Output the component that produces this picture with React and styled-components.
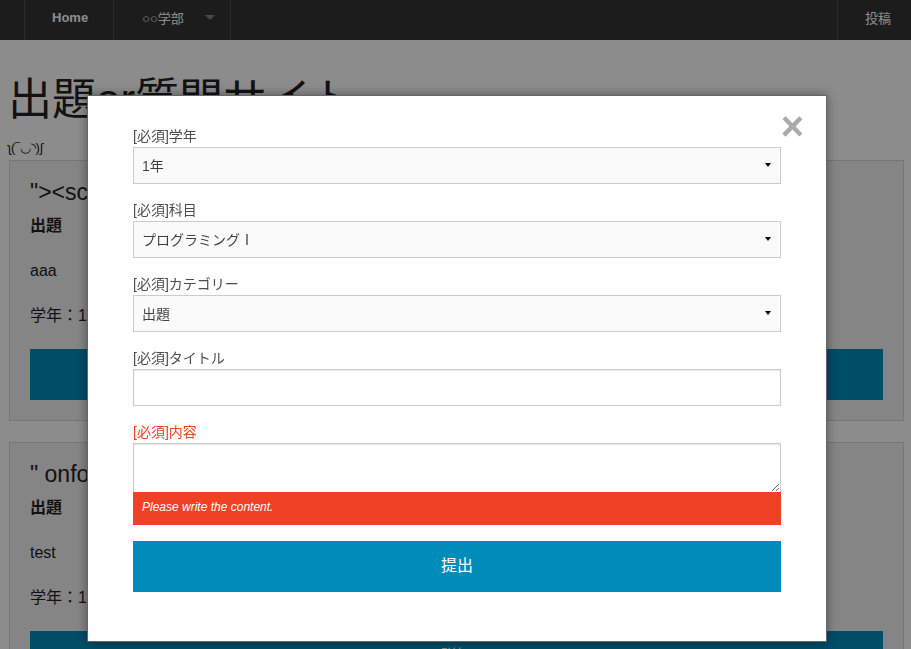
import React from "react";
import styled, { createGlobalStyle } from "styled-components";

const GlobalStyle = createGlobalStyle`
  html, body { margin: 0; padding: 0; background: #fff; }
  body {
    font-family: "Liberation Sans", "Noto Sans CJK JP", sans-serif;
    color: #222;
    overflow: hidden;
  }
  *, *::before, *::after { box-sizing: border-box; }
`;

const TopBar = styled.nav`
  display: flex;
  height: 40px;
  background: #333;
`;

const TitleArea = styled.div`
  width: 25px;
  border-right: 1px solid #4e4e4e;
`;

const NavItem = styled.a`
  display: flex;
  align-items: center;
  height: 40px;
  padding: ${(p) => p.$pad};
  padding-bottom: 5px;
  color: #fff;
  font-size: 13px;
  font-weight: ${(p) => (p.$bold ? "bold" : "normal")};
  text-decoration: none;
  border-right: ${(p) => (p.$edge === "right" ? "1px solid #4e4e4e" : "none")};
  border-left: ${(p) => (p.$edge === "left" ? "1px solid #4e4e4e" : "none")};
`;

const Caret = styled.span`
  margin-left: 21px;
  width: 0;
  height: 0;
  border-left: 5px solid transparent;
  border-right: 5px solid transparent;
  border-top: 5px solid rgba(255, 255, 255, 0.4);
`;

const Spacer = styled.div`
  flex: 1;
`;

const Main = styled.main`
  padding: 0 7px 0 8px;
`;

const Title = styled.h1`
  margin: 29px 0 0;
  font-size: 44px;
  line-height: 61px;
  font-weight: normal;
  color: #222;
`;

const Kaomoji = styled.p`
  margin: 8px 0 2px;
  font-size: 13px;
  line-height: 20px;
`;

const Panel = styled.section`
  display: flex;
  flex-direction: column;
  margin: 0 0 21px 1px;
  padding: 15px 20px 20px;
  background: #f2f2f2;
  border: 1px solid #d8d8d8;
`;

const PostTitle = styled.h4`
  margin: 0;
  font-size: 23px;
  line-height: 32px;
  font-weight: normal;
  color: #222;
  white-space: nowrap;
`;

const Kind = styled.h5`
  margin: 6px 0 0;
  font-size: 16px;
  line-height: 24px;
  font-weight: bold;
`;

const Text = styled.p`
  margin: ${(p) => p.$mt}px 0 0;
  font-size: 16px;
  line-height: 24px;
`;

const BigButton = styled.button`
  display: flex;
  align-items: center;
  justify-content: center;
  width: 100%;
  height: 51px;
  margin: ${(p) => p.$margin || "0"};
  padding: 0 0 5px;
  border: none;
  background: #008cba;
  color: #fff;
  font-family: inherit;
  font-size: 16px;
  font-weight: normal;
  cursor: pointer;
`;

const Overlay = styled.div`
  position: fixed;
  inset: 0;
  background: rgba(0, 0, 0, 0.45);
`;

const Modal = styled.div`
  position: fixed;
  top: 95px;
  left: 87px;
  width: 740px;
  padding: 30px 45px;
  background: #fff;
  border: 1px solid #666;
  box-shadow: 0 0 10px rgba(0, 0, 0, 0.4);
`;

const Close = styled.a`
  position: absolute;
  top: 10px;
  right: 22px;
  font-size: 40px;
  line-height: 1;
  font-weight: bold;
  color: #aaa;
  cursor: pointer;
`;

const Form = styled.form`
  display: flex;
  flex-direction: column;
`;

const Label = styled.label`
  display: block;
  font-size: 14px;
  line-height: 21px;
  color: ${(p) => (p.$error ? "#f04124" : "#4d4d4d")};
`;

const SelectWrap = styled.div`
  position: relative;
  margin-bottom: 16px;
`;

const Select = styled.select`
  display: block;
  width: 100%;
  height: 37px;
  margin: 0;
  padding: 0 8px;
  border: 1px solid #ccc;
  border-radius: 0;
  background: #fafafa;
  color: rgba(0, 0, 0, 0.75);
  font-family: inherit;
  font-size: 14px;
  appearance: none;
  -webkit-appearance: none;
  outline: none;
`;

const SelectArrow = styled.span`
  position: absolute;
  top: 16px;
  right: 10px;
  width: 0;
  height: 0;
  border-left: 3px solid transparent;
  border-right: 3px solid transparent;
  border-top: 4px solid #000;
  pointer-events: none;
`;

const Input = styled.input`
  display: block;
  width: 100%;
  height: 37px;
  margin: 0 0 16px;
  padding: 8px;
  border: 1px solid #ccc;
  background: #fff;
  box-shadow: inset 0 1px 2px rgba(0, 0, 0, 0.1);
  font-family: inherit;
  font-size: 14px;
  outline: none;
`;

const TextArea = styled.textarea`
  display: block;
  width: 100%;
  height: 50px;
  margin: 0;
  padding: 8px;
  border: 1px solid #ccc;
  background: #fff;
  box-shadow: inset 0 1px 2px rgba(0, 0, 0, 0.1);
  font-family: inherit;
  font-size: 14px;
  outline: none;
`;

const ErrorMsg = styled.small`
  display: block;
  margin: -1px 0 16px;
  padding: 6px 9px 9px;
  background: #f04124;
  color: #fff;
  font-size: 12px;
  line-height: 18px;
  font-style: italic;
`;

const posts = [
  { title: '"><script>alert(1)</script>', kind: "出題", body: "aaa", meta: "学年：1年" },
  { title: '" onfocus="alert(1)"', kind: "出題", body: "test", meta: "学年：1年" },
];

const selects = [
  { label: "[必須]学年", value: "1年", options: ["1年", "2年", "3年", "4年"] },
  { label: "[必須]科目", value: "プログラミングⅠ", options: ["プログラミングⅠ", "プログラミングⅡ"] },
  { label: "[必須]カテゴリー", value: "出題", options: ["出題", "質問"] },
];

export default function App() {
  return (
    <>
      <GlobalStyle />
      <TopBar>
        <TitleArea />
        <NavItem $bold $edge="right" $pad="0 25px 0 27px">Home</NavItem>
        <NavItem $edge="right" $pad="0 15px 0 28px">
          ○○学部
          <Caret />
        </NavItem>
        <Spacer />
        <NavItem $edge="left" $pad="0 20px 0 27px">投稿</NavItem>
      </TopBar>
      <Main>
        <Title>出題or質問サイト</Title>
        <Kaomoji>ʅ(‾◡◝)ʃ</Kaomoji>
        {posts.map((p, i) => (
          <Panel key={i}>
            <PostTitle>{p.title}</PostTitle>
            <Kind>{p.kind}</Kind>
            <Text $mt={21}>{p.body}</Text>
            <Text $mt={21}>{p.meta}</Text>
            <BigButton $margin="21px 0 0">詳細</BigButton>
          </Panel>
        ))}
      </Main>
      <Overlay />
      <Modal>
        <Close>×</Close>
        <Form onSubmit={(e) => e.preventDefault()}>
          {selects.map((s) => (
            <div key={s.label}>
              <Label>{s.label}</Label>
              <SelectWrap>
                <Select defaultValue={s.value}>
                  {s.options.map((o) => (
                    <option key={o}>{o}</option>
                  ))}
                </Select>
                <SelectArrow />
              </SelectWrap>
            </div>
          ))}
          <Label>[必須]タイトル</Label>
          <Input type="text" />
          <Label $error>[必須]内容</Label>
          <TextArea />
          <ErrorMsg>Please write the content.</ErrorMsg>
          <BigButton type="submit" $margin="0 0 19px">提出</BigButton>
        </Form>
      </Modal>
    </>
  );
}
